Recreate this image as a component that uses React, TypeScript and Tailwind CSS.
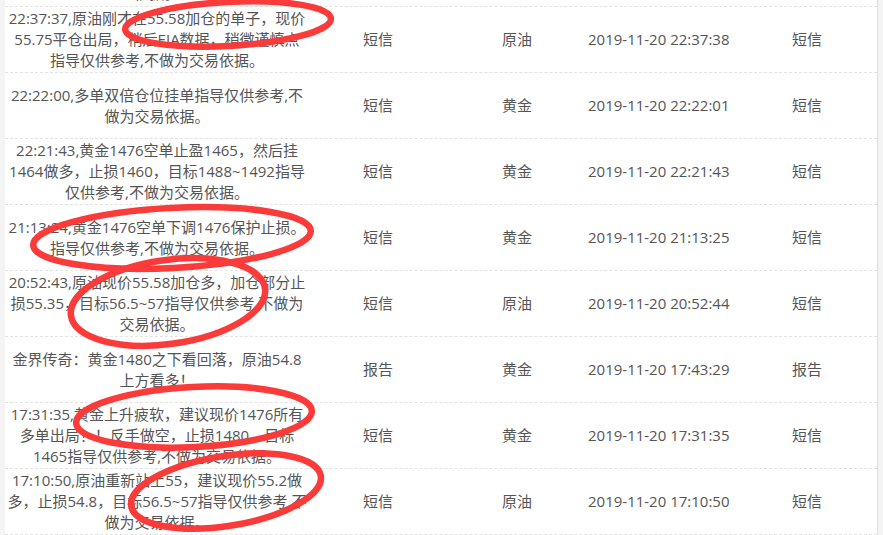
const rows = [
  {
    lines: ["22:37:37,原油刚才在55.58加仓的单子，现价", "55.75平仓出局，稍后EIA数据，稍微谨慎点", "指导仅供参考,不做为交易依据。"],
    type: "短信",
    product: "原油",
    time: "2019-11-20 22:37:38",
    channel: "短信",
  },
  {
    lines: ["22:22:00,多单双倍仓位挂单指导仅供参考,不", "做为交易依据。"],
    type: "短信",
    product: "黄金",
    time: "2019-11-20 22:22:01",
    channel: "短信",
  },
  {
    lines: ["22:21:43,黄金1476空单止盈1465，然后挂", "1464做多，止损1460，目标1488~1492指导", "仅供参考,不做为交易依据。"],
    type: "短信",
    product: "黄金",
    time: "2019-11-20 22:21:43",
    channel: "短信",
  },
  {
    lines: ["21:13:24,黄金1476空单下调1476保护止损。", "指导仅供参考,不做为交易依据。"],
    type: "短信",
    product: "黄金",
    time: "2019-11-20 21:13:25",
    channel: "短信",
  },
  {
    lines: ["20:52:43,原油现价55.58加仓多，加仓部分止", "损55.35，目标56.5~57指导仅供参考,不做为", "交易依据。"],
    type: "短信",
    product: "原油",
    time: "2019-11-20 20:52:44",
    channel: "短信",
  },
  {
    lines: ["金界传奇：黄金1480之下看回落，原油54.8", "上方看多！"],
    type: "报告",
    product: "黄金",
    time: "2019-11-20 17:43:29",
    channel: "报告",
  },
  {
    lines: ["17:31:35,黄金上升疲软，建议现价1476所有", "多单出局！！反手做空，止损1480，目标", "1465指导仅供参考,不做为交易依据。"],
    type: "短信",
    product: "黄金",
    time: "2019-11-20 17:31:35",
    channel: "短信",
  },
  {
    lines: ["17:10:50,原油重新站上55，建议现价55.2做", "多，止损54.8，目标56.5~57指导仅供参考,不", "做为交易依据。"],
    type: "短信",
    product: "原油",
    time: "2019-11-20 17:10:50",
    channel: "短信",
  },
]

// hand-drawn red circles over the screenshot
const marks = [
  { cx: 228, cy: 24, rx: 103, ry: 22, rot: -3 },
  { cx: 172, cy: 238, rx: 139, ry: 30, rot: -3 },
  { cx: 168, cy: 302, rx: 98, ry: 42, rot: -8 },
  { cx: 194, cy: 417, rx: 118, ry: 30, rot: -3 },
  { cx: 226, cy: 491, rx: 96, ry: 35, rot: -9 },
]

function Row({ lines, type, product, time, channel }: { lines: string[]; type: string; product: string; time: string; channel: string }) {
  return (
    <div className="grid grid-cols-[304px_193px_86px_204px_1fr] items-center h-[66px] shrink-0 border-b border-dashed border-[#e3e3e3]">
      <div className="text-center">
        {lines.map((l, i) => (
          <div key={i} className="whitespace-nowrap">{l}</div>
        ))}
      </div>
      <div className="pl-[54px]">{type}</div>
      <div>{product}</div>
      <div>{time}</div>
      <div>{channel}</div>
    </div>
  )
}

export default function App() {
  return (
    <div
      className="relative w-[883px] h-[535px] overflow-hidden bg-[#f4f4f4] text-[15px] leading-[21px] text-[#555]"
      style={{ fontFamily: '"Open Sans", "Noto Sans CJK SC", sans-serif' }}
    >
      <div className="ml-[5px] w-[873px] h-full bg-white border-r border-[#dedede] flex flex-col">
        <div className="-mt-[59px] flex flex-col">
          <div className="grid grid-cols-[304px_1fr] items-end h-[66px] shrink-0 border-b border-dashed border-[#e3e3e3] pb-[2px]">
            <div className="text-center">依据。</div>
          </div>
          {rows.map((r, i) => (
            <Row key={i} {...r} />
          ))}
        </div>
      </div>
      <svg className="absolute inset-0 pointer-events-none" width="883" height="535" viewBox="0 0 883 535">
        {marks.map((m, i) => (
          <ellipse
            key={i}
            cx={m.cx}
            cy={m.cy}
            rx={m.rx}
            ry={m.ry}
            transform={`rotate(${m.rot} ${m.cx} ${m.cy})`}
            fill="none"
            stroke="#fb3a3a"
            strokeWidth="6.5"
          />
        ))}
      </svg>
    </div>
  )
}
